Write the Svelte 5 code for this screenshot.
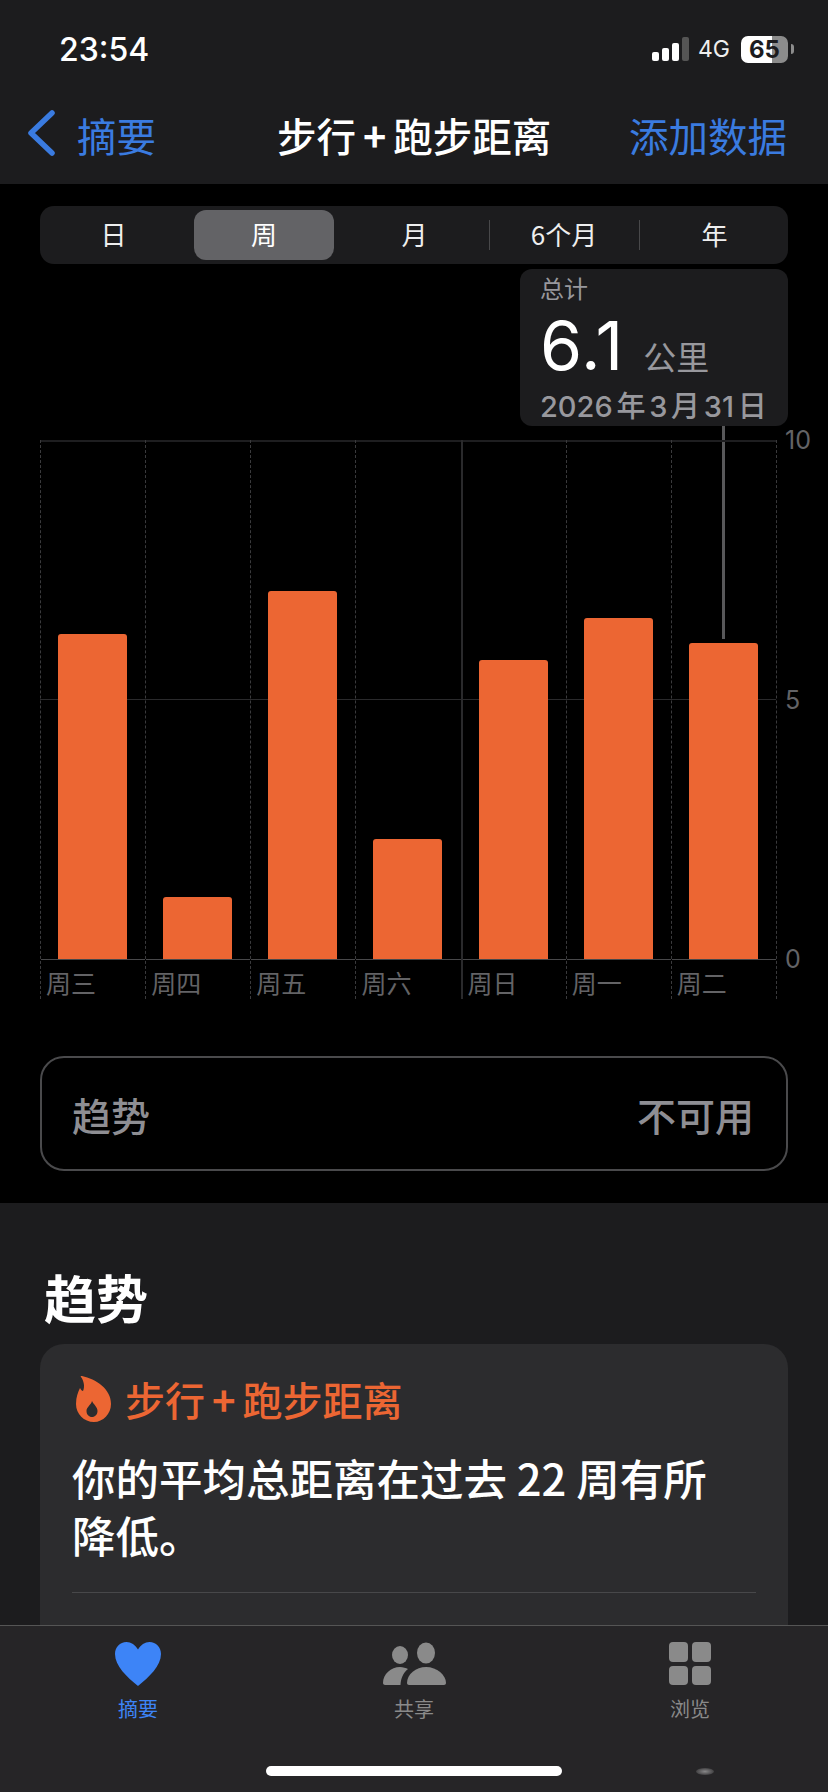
<script>
	const ranges = ['日', '周', '月', '6个月', '年'];

	// height in px above the baseline, the plot is 518 tall for 10 km
	const days = [
		{ label: '周三', height: 325 },
		{ label: '周四', height: 62 },
		{ label: '周五', height: 368 },
		{ label: '周六', height: 120 },
		{ label: '周日', height: 299, solid: true },
		{ label: '周一', height: 341 },
		{ label: '周二', height: 316 }
	];
</script>

<div class="screen">
	<header class="top">
		<div class="status">
			<span class="time">23:54</span>
			<div class="status-right">
				<div class="signal">
					<i class="s1"></i><i class="s2"></i><i class="s3"></i><i class="s4"></i>
				</div>
				<span class="net">4G</span>
				<div class="battery"><span>65</span></div>
				<div class="nub"></div>
			</div>
		</div>
		<nav class="nav">
			<div class="back">
				<svg width="30" height="46" viewBox="0 0 30 46" fill="none">
					<path d="M26 3 L5 23 L26 43" stroke="#3a7be0" stroke-width="5.5" stroke-linecap="round" stroke-linejoin="round" />
				</svg>
				<span>摘要</span>
			</div>
			<h1>步行<b>+</b>跑步距离</h1>
			<span class="add">添加数据</span>
		</nav>
	</header>

	<section class="detail">
		<div class="range">
			{#each ranges as r, i}
				<div class="range-item" class:first={i === 0} class:selected={i === 1} class:sep={i === 3 || i === 4}>{r}</div>
			{/each}
		</div>

		<div class="chart">
			<div class="tip">
				<div class="tip-label">总计</div>
				<div class="tip-value">6.1<span>公里</span></div>
				<div class="tip-date">2026 年 3 月 31 日</div>
			</div>
			<div class="tip-line"></div>

			<div class="weeks">
				<div class="midline"></div>
				{#each days as d}
					<div class="day" class:solid={d.solid}>
						<div class="plot">
							<div class="bar" style="height: {d.height}px"></div>
						</div>
						<div class="day-label">{d.label}</div>
					</div>
				{/each}
			</div>
			<div class="axis">
				<span>10</span>
				<span>5</span>
				<span>0</span>
			</div>
		</div>

		<div class="trend-pill">
			<span>趋势</span>
			<span>不可用</span>
		</div>
	</section>

	<section class="lower">
		<h2>趋势</h2>
		<div class="card">
			<div class="card-title">
				<svg width="36" height="46" viewBox="0 0 36 46">
					<path fill-rule="evenodd" fill="#ec6633" d="M5 1 C4 0 5 0 6 0 C20 3 35 13 35 28 C35 38 27 46 18 46 C8 46 0 38 0 28 C0 21 2 16 4 12 C5 14 6 15 7 15 C9 11 8 5 5 1 Z M16 25 C15 29 10.500 31 10.500 35 C10.500 38.500 13 41 16 41 C19 41 21.500 38.500 21.500 35 C21.500 31 18 29 16 25 Z" />
				</svg>
				<span>步行<b>+</b>跑步距离</span>
			</div>
			<p>你的平均总距离在过去 22 周有所降低。</p>
			<div class="card-rule"></div>
		</div>
	</section>

	<footer class="tabs">
		<div class="tab active">
			<svg width="46" height="44" viewBox="0 0 46 44">
				<path fill="#3d84f7" d="M23 44 C12 35 0 24 0 12 C0 5 5 0 11.500 0 C16 0 20.500 3 23 7.500 C25.500 3 30 0 34.500 0 C41 0 46 5 46 12 C46 24 34 35 23 44 Z" />
			</svg>
			<span>摘要</span>
		</div>
		<div class="tab">
			<svg width="63" height="44" viewBox="0 0 63 44">
				<ellipse cx="17" cy="13" rx="8" ry="9" fill="#8a8a8a" />
				<ellipse cx="43" cy="11" rx="9" ry="10.500" fill="#8a8a8a" />
				<path fill="#8a8a8a" d="M0 41 C0 32 8 25 17 25 C20 25 23 26 25 27 C20 31 18 36 17.500 43 L2 43 C1 43 0 42 0 41 Z" />
				<path fill="#8a8a8a" d="M24 41 C24 32 33 25 43 25 C54 25 63 33 63 41 C63 42 62 43 61 43 L26 43 C25 43 24 42 24 41 Z" />
			</svg>
			<span>共享</span>
		</div>
		<div class="tab">
			<div class="grid-icon"><i></i><i></i><i></i><i></i></div>
			<span>浏览</span>
		</div>
		<div class="home"></div>
		<div class="spark"></div>
	</footer>
</div>

<style>
	:global(body) {
		margin: 0;
		background: #000;
	}

	.screen {
		position: relative;
		width: 828px;
		height: 1792px;
		overflow: hidden;
		background: #1c1c1e;
		font-family: "Noto Sans CJK SC", "Noto Sans", sans-serif;
		color: #fff;
		display: flex;
		flex-direction: column;
	}

	/* header */
	.top {
		height: 184px;
		box-sizing: border-box;
		background: #1c1c1e;
		flex: none;
	}

	.status {
		display: flex;
		justify-content: space-between;
		align-items: center;
		height: 36px;
		padding: 31px 34px 0 59px;
	}

	.time {
		font-family: Inter, sans-serif;
		font-size: 32px;
		font-weight: 500;
	}

	.status-right {
		display: flex;
		align-items: center;
	}

	.signal {
		display: flex;
		align-items: flex-end;
		gap: 3px;
		height: 24px;
	}

	.signal i {
		width: 7px;
		background: #fff;
		border-radius: 2px;
	}

	.s1 { height: 9px; }
	.s2 { height: 13px; }
	.s3 { height: 18px; }
	.signal .s4 { height: 24px; background: #555; }

	.net {
		font-family: Inter, sans-serif;
		font-size: 23px;
		margin: 0 11px 0 9px;
		color: #eee;
	}

	.battery {
		width: 47px;
		height: 27px;
		border-radius: 7px;
		background: linear-gradient(to right, #fff 66%, #8c8c8c 66%);
		color: #1c1c1e;
		font-family: Inter, sans-serif;
		font-size: 24px;
		font-weight: 700;
		line-height: 27px;
		text-align: center;
	}

	.nub {
		width: 3px;
		height: 10px;
		margin-left: 3px;
		background: #8c8c8c;
		border-radius: 0 3px 3px 0;
	}

	.nav {
		display: flex;
		align-items: center;
		padding: 43px 41px 0 26px;
		height: 48px;
		color: #3a7be0;
		font-size: 39.500px;
	}

	.back {
		display: flex;
		align-items: center;
		gap: 21px;
		width: 251px;
		flex: none;
	}

	.back svg {
		margin-top: -3px;
	}

	.nav h1 {
		margin: 0 auto 0 0;
		font-size: 39.500px;
		font-weight: 500;
		color: #fff;
		white-space: nowrap;
	}

	b {
		font-weight: 700;
		margin: 0 7px;
	}

	/* chart section */
	.detail {
		background: #000;
		height: 1019px;
		flex: none;
		padding: 22px 40px 0;
		box-sizing: border-box;
	}

	.range {
		display: grid;
		grid-template-columns: 150px 140px 155px 150px 1fr;
		height: 58px;
		padding: 4px;
		box-sizing: border-box;
		background: #1c1c1e;
		border-radius: 14px;
		font-size: 26px;
		line-height: 47px;
		text-align: center;
		color: #eee;
	}

	.range-item {
		position: relative;
		border-radius: 12px;
	}

	.first {
		padding-right: 11px;
	}

	.selected {
		background: #636366;
		color: #fff;
	}

	.range-item:nth-child(3), .range-item:nth-child(5) {
		padding-left: 6px;
	}

	.sep::before {
		content: '';
		position: absolute;
		left: 0;
		top: 10px;
		height: 30px;
		width: 1px;
		background: #48484a;
	}

	.chart {
		position: relative;
		display: flex;
		margin-top: 176px;
	}

	.tip {
		position: absolute;
		right: 0;
		top: -171px;
		width: 268px;
		height: 157px;
		box-sizing: border-box;
		padding: 2px 20px 0;
		background: #1c1c1e;
		border-radius: 12px;
		color: #98989d;
		white-space: nowrap;
	}

	.tip-label {
		font-size: 24px;
		line-height: 34px;
	}

	.tip-value {
		display: flex;
		align-items: baseline;
		height: 72px;
		margin-top: 4px;
		font-family: Inter, sans-serif;
		font-size: 68px;
		line-height: 72px;
		font-weight: 400;
		letter-spacing: 1px;
		color: #fff;
	}

	.tip-value span {
		font-family: "Noto Sans CJK SC", sans-serif;
		font-size: 33px;
		line-height: 72px;
		letter-spacing: 0;
		color: #98989d;
		margin-left: 19px;
	}

	.tip-date {
		font-family: Inter, "Noto Sans CJK SC", sans-serif;
		font-size: 29px;
		line-height: 40px;
		height: 39px;
		margin-top: 6px;
		font-weight: 500;
		word-spacing: -4px;
	}

	.tip-line {
		position: absolute;
		left: 682px;
		top: -14px;
		width: 3px;
		height: 213px;
		background: #58585a;
	}

	.weeks {
		position: relative;
		display: grid;
		grid-template-columns: repeat(7, 1fr);
		border-right: 1px dashed #3a3a3c;
		width: 736px;
		flex: none;
	}

	.midline {
		position: absolute;
		left: 0;
		right: 0;
		top: 259px;
		height: 1px;
		background: #2a2a2c;
	}

	.day {
		position: relative;
		border-left: 1px dashed #3a3a3c;
		height: 559px;
	}

	.day.solid {
		border-left: 2px solid #2a2a2c;
	}

	.plot {
		height: 517px;
		display: flex;
		align-items: flex-end;
		padding-left: 17px;
		border-top: 2px solid #1e1e20;
		border-bottom: 1px solid #48484a;
	}

	.day.solid .plot {
		padding-left: 16px;
	}

	.bar {
		width: 69px;
		background: #ec6633;
		border-radius: 3px 3px 0 0;
	}

	.day-label {
		font-size: 25px;
		line-height: 45px;
		padding-left: 5px;
		color: #636366;
	}

	.axis {
		font-family: Inter, sans-serif;
		font-size: 25px;
		color: #636366;
		height: 549px;
		margin-left: 8px;
		display: flex;
		flex-direction: column;
		justify-content: space-between;
		margin-top: -15px;
		line-height: 30px;
	}

	.trend-pill {
		margin-top: 57px;
		height: 115px;
		box-sizing: border-box;
		border: 2px solid #4a4a4c;
		border-radius: 24px;
		display: flex;
		align-items: center;
		justify-content: space-between;
		padding: 0 32px 0 30px;
		font-size: 39px;
		font-weight: 500;
		color: #8e8e93;
	}

	/* lower */
	.lower {
		flex: 1;
		padding: 0 40px;
		background: #1c1c1e;
	}

	h2 {
		margin: 56px 0 0 4px;
		font-size: 52px;
		line-height: 76px;
		font-weight: 700;
		height: 85px;
	}

	.card {
		background: #2c2c2e;
		border-radius: 24px;
		padding: 27px 32px 0;
		height: 300px;
	}

	.card-title {
		display: flex;
		align-items: center;
		gap: 13px;
		color: #ec6633;
		font-size: 40px;
		font-weight: 500;
		height: 56px;
		margin-left: 4px;
	}

	.card p {
		margin: 22px 0 0;
		padding-right: 30px;
		font-size: 43.500px;
		line-height: 57px;
		font-weight: 500;
	}

	.card-rule {
		height: 1px;
		background: #48484a;
		margin-top: 29px;
	}

	/* tab bar */
	.tabs {
		position: absolute;
		left: 0;
		right: 0;
		bottom: 0;
		height: 167px;
		box-sizing: border-box;
		background: #262527;
		border-top: 1px solid #555;
		display: grid;
		grid-template-columns: repeat(3, 276px);
		padding-top: 16px;
		color: #8a8a8a;
		font-size: 20px;
	}

	.tab {
		display: flex;
		flex-direction: column;
		align-items: center;
		height: 81px;
		justify-content: space-between;
	}

	.tab.active {
		color: #3d84f7;
	}

	.grid-icon {
		display: grid;
		grid-template-columns: 19px 19px;
		grid-auto-rows: 19.500px;
		gap: 4px;
	}

	.grid-icon i {
		background: #8a8a8a;
		border-radius: 4px;
	}

	.home {
		position: absolute;
		left: 266px;
		bottom: 16px;
		width: 296px;
		height: 10px;
		border-radius: 5px;
		background: #fff;
	}

	/* faint glint low on the right of the bar */
	.spark {
		position: absolute;
		left: 696px;
		bottom: 17px;
		width: 18px;
		height: 7px;
		border-radius: 50%;
		background: radial-gradient(ellipse at center, rgba(255, 255, 255, 0.45), rgba(255, 255, 255, 0));
	}
</style>
